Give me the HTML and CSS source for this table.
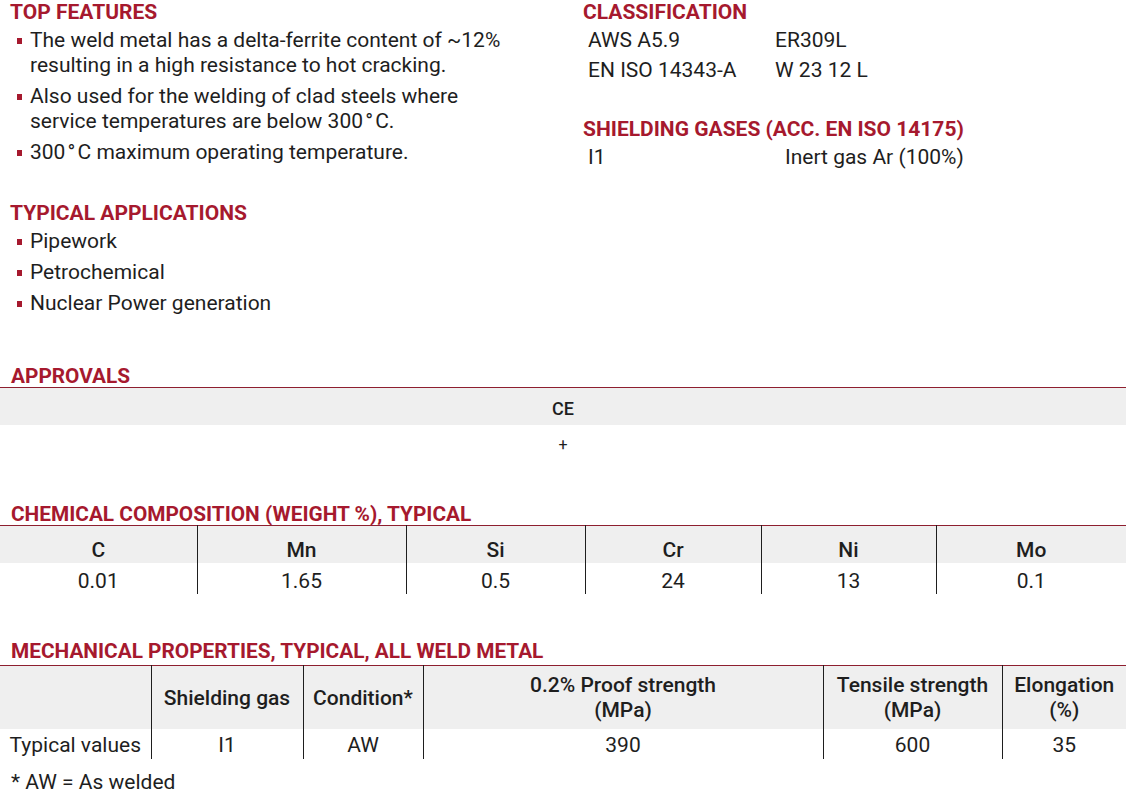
FILE: index.html
```html
<!DOCTYPE html>
<html lang="en">
<head>
<meta charset="utf-8">
<title>ER309L</title>
<link rel="stylesheet" href="styles.css">
</head>
<body>
<div class="page">
  <div class="top">
    <div class="col-left">
      <section class="block">
        <h2 class="title">TOP FEATURES</h2>
        <ul class="bullets">
          <li>The weld metal has a delta-ferrite content of ~12% resulting in a high resistance to hot cracking.</li>
          <li>Also used for the welding of clad steels where service temperatures are below 300&#8202;°&#8202;C.</li>
          <li>300&#8202;°&#8202;C maximum operating temperature.</li>
        </ul>
      </section>
      <section class="block apps">
        <h2 class="title">TYPICAL APPLICATIONS</h2>
        <ul class="bullets">
          <li>Pipework</li>
          <li>Petrochemical</li>
          <li>Nuclear Power generation</li>
        </ul>
      </section>
    </div>
    <div class="col-right">
      <section class="block">
        <h2 class="title">CLASSIFICATION</h2>
        <div class="kv class-kv">
          <span>AWS A5.9</span><span>ER309L</span>
          <span>EN ISO 14343-A</span><span>W 23 12 L</span>
        </div>
      </section>
      <section class="block gases">
        <h2 class="title">SHIELDING GASES (ACC. EN ISO 14175)</h2>
        <div class="kv gas-kv">
          <span>I1</span><span>Inert gas Ar (100%)</span>
        </div>
      </section>
    </div>
  </div>

  <section class="tbl-section approvals">
    <h3 class="tbl-title">APPROVALS</h3>
    <table class="data appr">
      <tr><th>CE</th></tr>
      <tr><td>+</td></tr>
    </table>
  </section>

  <section class="tbl-section chem">
    <h3 class="tbl-title">CHEMICAL COMPOSITION (WEIGHT %), TYPICAL</h3>
    <table class="data chem-t">
      <tr><th>C</th><th>Mn</th><th>Si</th><th>Cr</th><th>Ni</th><th>Mo</th></tr>
      <tr><td>0.01</td><td>1.65</td><td>0.5</td><td>24</td><td>13</td><td>0.1</td></tr>
    </table>
  </section>

  <section class="tbl-section mech">
    <h3 class="tbl-title">MECHANICAL PROPERTIES, TYPICAL, ALL WELD METAL</h3>
    <table class="data mech-t">
      <tr><th></th><th>Shielding gas</th><th>Condition*</th><th>0.2% Proof strength<br>(MPa)</th><th>Tensile strength<br>(MPa)</th><th>Elongation<br>(%)</th></tr>
      <tr><td>Typical values</td><td>I1</td><td>AW</td><td>390</td><td>600</td><td>35</td></tr>
    </table>
    <p class="note">* AW = As welded</p>
  </section>
</div>
</body>
</html>
```

FILE: styles.css
```css
* { box-sizing: border-box; }
html, body { margin: 0; padding: 0; background: #fff; }
body {
  font-family: Roboto, "Open Sans", "Liberation Sans", sans-serif;
  color: #1e1e1e;
  font-size: 21px;
}
.page { width: 1126px; }

.top { display: flex; padding-left: 10px; }
.col-left { width: 573px; }
.col-right { flex: 1; }

.title {
  margin: 0;
  color: #a6192e;
  font-size: 21px;
  font-weight: 700;
  line-height: 24px;
}
.bullets { list-style: none; margin: 4px 0 0; padding: 0 0 0 20px; }
.bullets li {
  position: relative;
  line-height: 25px;
  margin-bottom: 6px;
  width: 482px;
}
.bullets li::before {
  content: "";
  position: absolute;
  left: -13px;
  top: 10px;
  width: 5px;
  height: 6px;
  background: #a6192e;
}
.apps { margin-top: 36px; }

.kv { display: grid; margin: 4px 0 0 5px; row-gap: 5px; line-height: 25px; }
.class-kv { grid-template-columns: 187px auto; }
.gas-kv { grid-template-columns: 197px auto; }
.gases { margin-top: 34px; }

.approvals { margin-top: 43px; }
.chem { margin-top: 41px; }
.mech { margin-top: 46px; }
.tbl-title {
  margin: 0 0 0 11px;
  color: #a6192e;
  font-size: 20.8px;
  font-weight: 700;
  line-height: 22px;
}
.mech .tbl-title { margin-bottom: 3px; }
.data {
  width: 1126px;
  border-collapse: collapse;
  table-layout: fixed;
  border-top: 1px solid #8e1f2f;
}
.data th, .data td {
  padding: 0;
  text-align: center;
  vertical-align: middle;
  line-height: 25px;
  border-left: 1px solid #1e1e1e;
}
.data th:first-child, .data td:first-child { border-left: none; }
.data th { background: #efefef; font-weight: 500; height: 37px; }
.data td { height: 30px; }
.appr th { font-size: 18px; padding-top: 4px; }
.appr td { height: 37px; font-size: 16px; padding-top: 2px; }

.chem-t th { padding-top: 12px; }
.chem-t td { height: 31px; padding-top: 6px; }
.chem-t th:nth-child(1) { width: 197px; }
.chem-t th:nth-child(2) { width: 209px; }
.chem-t th:nth-child(3) { width: 179px; }
.chem-t th:nth-child(4) { width: 176px; }
.chem-t th:nth-child(5) { width: 175px; }
.chem-t th:nth-child(6) { width: 190px; }

.mech-t th { height: 64px; padding-top: 2px; }
.mech-t td { padding-top: 2px; }
.mech-t th:nth-child(1) { width: 151px; }
.mech-t th:nth-child(2) { width: 152px; }
.mech-t th:nth-child(3) { width: 120px; }
.mech-t th:nth-child(4) { width: 400px; }
.mech-t th:nth-child(5) { width: 179px; }
.mech-t th:nth-child(6) { width: 124px; }

.note { margin: 11px 0 0 11px; line-height: 25px; }
```
